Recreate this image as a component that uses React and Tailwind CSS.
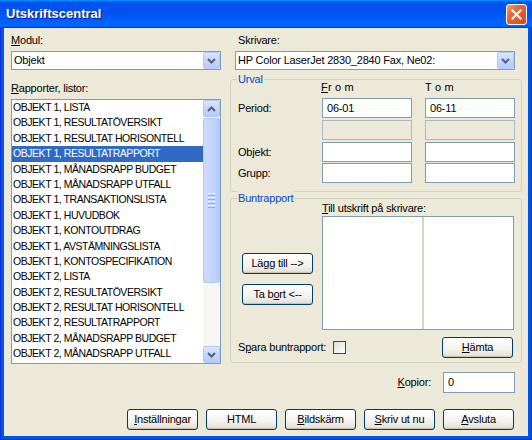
import React from 'react';

const rapporter = [
  'OBJEKT 1, LISTA',
  'OBJEKT 1, RESULTATÖVERSIKT',
  'OBJEKT 1, RESULTAT HORISONTELL',
  'OBJEKT 1, RESULTATRAPPORT',
  'OBJEKT 1, MÅNADSRAPP BUDGET',
  'OBJEKT 1, MÅNADSRAPP UTFALL',
  'OBJEKT 1, TRANSAKTIONSLISTA',
  'OBJEKT 1, HUVUDBOK',
  'OBJEKT 1, KONTOUTDRAG',
  'OBJEKT 1, AVSTÄMNINGSLISTA',
  'OBJEKT 1, KONTOSPECIFIKATION',
  'OBJEKT 2, LISTA',
  'OBJEKT 2, RESULTATÖVERSIKT',
  'OBJEKT 2, RESULTAT HORISONTELL',
  'OBJEKT 2, RESULTATRAPPORT',
  'OBJEKT 2, MÅNADSRAPP BUDGET',
  'OBJEKT 2, MÅNADSRAPP UTFALL',
];

function U({ children }) {
  return <span className="underline underline-offset-[1px]">{children}</span>;
}

function Chevron({ up }) {
  return (
    <svg width="9" height="6" viewBox="0 0 9 6">
      <path
        d={up ? 'M1 5 L4.5 1.5 L8 5' : 'M1 1 L4.5 4.5 L8 1'}
        fill="none"
        stroke="#4D6185"
        strokeWidth="2"
      />
    </svg>
  );
}

function XpBlueBtn({ up }) {
  return (
    <div className="flex h-[17px] w-[17px] shrink-0 items-center justify-center rounded-[2px] border border-[#B4C8F6] bg-[linear-gradient(180deg,#dce7fe_0%,#c4d6fc_50%,#b5cbf9_100%)]">
      <Chevron up={up} />
    </div>
  );
}

function Combo({ value, className }) {
  return (
    <div className={`flex h-[19px] items-center border border-[#7F9DB9] bg-white ${className}`}>
      <span className="flex-1 truncate pl-[2px]">{value}</span>
      <div className="flex h-[17px] w-[17px] items-center justify-center rounded-[2px] border border-[#B4C8F6] bg-[linear-gradient(180deg,#dce7fe_0%,#c4d6fc_50%,#b5cbf9_100%)]">
        <Chevron />
      </div>
    </div>
  );
}

function TextBox({ value, disabled }) {
  return (
    <div
      className={
        disabled
          ? 'h-[20px] w-[90px] border border-[#A9B8C9] bg-[#ECE9D8]'
          : 'flex h-[20px] w-[90px] items-center border border-[#7F9DB9] bg-white pl-[4px]'
      }
    >
      {value}
    </div>
  );
}

function Btn({ children, className }) {
  return (
    <button
      className={`flex h-[21px] w-[71px] items-center justify-center rounded-[3px] border border-[#003C74] bg-[linear-gradient(180deg,#ffffff_0%,#f3f2ee_60%,#e6e3da_90%,#d6d0c5_100%)] shadow-[inset_0_-1px_0_#c9c2b4] ${className || ''}`}
    >
      {children}
    </button>
  );
}

function GroupBox({ title, className, children }) {
  return (
    <div className={`relative rounded-[3px] border border-[#D0D0BF] ${className}`}>
      <span className="absolute left-[6px] top-[-8px] bg-[#ECE9D8] px-[1px] leading-[14px] text-[#0046D5]">
        {title}
      </span>
      {children}
    </div>
  );
}

function TitleBar() {
  return (
    <div className="flex h-[28px] shrink-0 items-center bg-[linear-gradient(180deg,#0997ff_0%,#0053ee_8%,#0050ee_40%,#0066ff_88%,#0066ff_93%,#005bff_95%,#003dd7_96%,#003dd7_100%)] pl-[6px]">
      <span className="text-[13px] font-bold tracking-normal text-white [text-shadow:1px_1px_#0f1089]">
        Utskriftscentral
      </span>
      <div className="ml-auto mr-[5px] flex h-[21px] w-[21px] items-center justify-center rounded-[3px] border border-white bg-[linear-gradient(135deg,#f3a185_0%,#e4683f_35%,#d9491f_100%)]">
        <svg width="11" height="11" viewBox="0 0 11 11">
          <path d="M1.5 1.5 L9.5 9.5 M9.5 1.5 L1.5 9.5" stroke="#fff" strokeWidth="2" strokeLinecap="square" />
        </svg>
      </div>
    </div>
  );
}

function ListBox() {
  return (
    <div className="mt-[4px] flex h-[265px] w-[210px] border border-[#7F9DB9] bg-white">
      <div className="flex-1 overflow-hidden text-[10.5px] tracking-[-0.45px]">
        {rapporter.map((r, i) => (
          <div
            key={i}
            className={
              i === 3
                ? 'h-[15.4px] whitespace-nowrap bg-[#316AC5] pl-[1px] leading-[15.4px] text-white'
                : 'h-[15.4px] whitespace-nowrap pl-[1px] leading-[15.4px]'
            }
          >
            {r}
          </div>
        ))}
      </div>
      <div className="flex w-[17px] flex-col bg-[#F7F6F1]">
        <XpBlueBtn up />
        <div className="mt-[1px] flex h-[165px] flex-col items-center justify-center gap-[1px] rounded-[2px] border border-[#B4C8F6] bg-[linear-gradient(90deg,#cddafd_0%,#c3d4fc_60%,#b7cbf9_100%)]">
          <div className="h-[1px] w-[7px] bg-[#EEF3FE]" />
          <div className="h-[1px] w-[7px] bg-[#8CAAE6]" />
          <div className="h-[1px] w-[7px] bg-[#EEF3FE]" />
          <div className="h-[1px] w-[7px] bg-[#8CAAE6]" />
          <div className="h-[1px] w-[7px] bg-[#EEF3FE]" />
          <div className="h-[1px] w-[7px] bg-[#8CAAE6]" />
          <div className="h-[1px] w-[7px] bg-[#EEF3FE]" />
          <div className="h-[1px] w-[7px] bg-[#8CAAE6]" />
        </div>
        <div className="flex-1" />
        <XpBlueBtn />
      </div>
    </div>
  );
}

export default function App() {
  return (
    <div className="flex h-[440px] w-[532px] flex-col bg-[#0055E5] font-['Liberation_Sans',Arial,sans-serif] text-[11px] tracking-[-0.2px] text-black shadow-[inset_0_0_0_1px_#0831D9]">
      <TitleBar />
      <div className="mx-[4px] mb-[4px] flex flex-1 flex-col bg-[#ECE9D8]">
        <div className="flex">
          {/* vänster kolumn */}
          <div className="ml-[7px] flex w-[210px] flex-col">
            <div className="mt-[5px] h-[14px] leading-[14px]">
              <U>M</U>odul:
            </div>
            <Combo value="Objekt" className="mt-[4px] w-[210px]" />
            <div className="mt-[11px] h-[14px] leading-[14px]">
              <U>R</U>apporter, listor:
            </div>
            <ListBox />
          </div>

          {/* höger kolumn */}
          <div className="ml-[9px] flex w-[292px] flex-col">
            <div className="mt-[5px] h-[14px] pl-[8px] leading-[14px]">Skrivare:</div>
            <Combo value="HP Color LaserJet 2830_2840 Fax, Ne02:" className="ml-[5px] mt-[4px] w-[280px]" />

            <GroupBox title="Urval" className="mt-[9px] h-[113px]">
              <div className="flex h-[14px] pl-[90px] leading-[14px]">
                <span className="w-[104px] tracking-[0.2px]">
                  <U>F</U>r o m
                </span>
                <span className="tracking-[0.2px]">T o m</span>
              </div>
              <div className="mt-[4px] flex h-[20px] items-center">
                <span className="w-[91px] pl-[7px]">Period:</span>
                <TextBox value="06-01" />
                <div className="w-[13px]" />
                <TextBox value="06-11" />
              </div>
              <div className="mt-[2px] flex h-[20px] items-center">
                <span className="w-[91px]" />
                <TextBox disabled />
                <div className="w-[13px]" />
                <TextBox disabled />
              </div>
              <div className="mt-[2px] flex h-[20px] items-center">
                <span className="w-[91px] pl-[7px]">Objekt:</span>
                <TextBox />
                <div className="w-[13px]" />
                <TextBox />
              </div>
              <div className="mt-[1px] flex h-[20px] items-center">
                <span className="w-[91px] pl-[7px]">Grupp:</span>
                <TextBox />
                <div className="w-[13px]" />
                <TextBox />
              </div>
            </GroupBox>

            <GroupBox title="Buntrapport" className="mt-[6px] h-[165px]">
              <div className="flex pt-[2px]">
                <div className="flex w-[91px] flex-col pl-[11px]">
                  <Btn className="mt-[52px] h-[20px] w-[70px]">
                    Lä<U>g</U>g till --&gt;
                  </Btn>
                  <Btn className="mt-[10px] h-[20px] w-[70px]">
                    Ta b<U>o</U>rt &lt;--
                  </Btn>
                </div>
                <div className="flex flex-col">
                  <div className="h-[14px] leading-[14px]">
                    <U>T</U>ill utskrift på skrivare:
                  </div>
                  <div className="mt-[1px] flex h-[114px] w-[192px] border border-[#7F9DB9] bg-white">
                    <div className="w-[101px] border-r-2 border-[#D7D4C8]" />
                  </div>
                </div>
              </div>
              <div className="mt-[7px] flex h-[20px] items-center pl-[7px]">
                <span>
                  S<U>p</U>ara buntrapport:
                </span>
                <div className="ml-[7px] h-[13px] w-[13px] border border-[#1C5180] bg-[linear-gradient(135deg,#dcdcd7_0%,#ffffff_100%)]" />
                <Btn className="ml-auto mr-[8px]">
                  <U>H</U>ämta
                </Btn>
              </div>
            </GroupBox>
          </div>
        </div>

        <div className="mt-[8px] flex h-[21px] items-center justify-end gap-[12px] pr-[13px]">
          <span>
            <U>K</U>opior:
          </span>
          <div className="flex h-[21px] w-[72px] items-center border border-[#7F9DB9] bg-white pl-[4px]">0</div>
        </div>

        <div className="mt-[16px] flex h-[21px] justify-end gap-[8px] pr-[14px]">
          <Btn>
            <U>I</U>nställningar
          </Btn>
          <Btn>HTML</Btn>
          <Btn>
            <U>B</U>ildskärm
          </Btn>
          <Btn>
            <U>S</U>kriv ut nu
          </Btn>
          <Btn>
            <U>A</U>vsluta
          </Btn>
        </div>
      </div>
    </div>
  );
}
